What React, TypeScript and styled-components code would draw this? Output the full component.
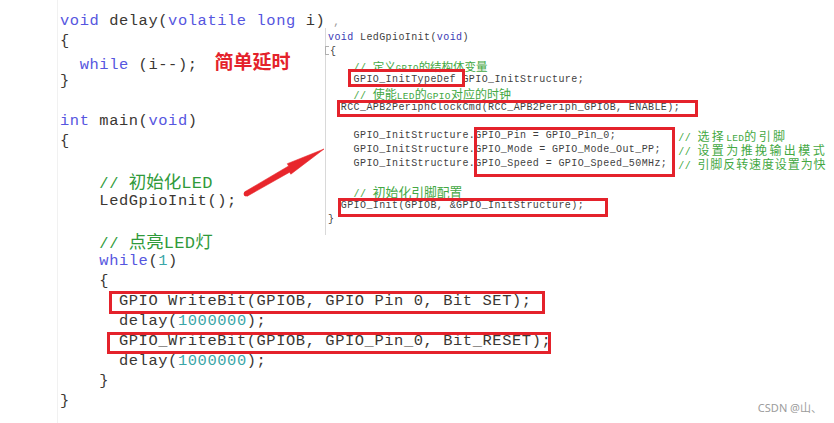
import React from "react";
import styled, { createGlobalStyle, css } from "styled-components";

const Global = createGlobalStyle`
  html, body { margin: 0; padding: 0; background: #fff; }
`;

const RED = "#e4222b";

const Page = styled.div`
  position: relative;
  width: 834px;
  height: 423px;
  overflow: hidden;
  background: #fff;
`;

const Editor = styled.div`
  box-sizing: border-box;
  height: 100%;
  margin-left: 57px;
  border-left: 1px solid #f1f1f1;
  padding: 11px 0 0 2px;
  font-family: "Liberation Mono", "Courier New", monospace;
  font-size: 15.4px;
  letter-spacing: 0.59px;
  line-height: 20px;
  color: #3b3733;
  white-space: pre;
`;

const Line = styled.div`
  height: 20px;
`;

const Kw = styled.span`
  color: #5656e0;
`;

const Num = styled.span`
  color: #3aa6a8;
`;

const Cm = styled.span<{ $c?: string }>`
  color: ${(p) => p.$c ?? "#2f9a3a"};
`;

const Cj = styled.span<{ $s: number; $ls?: number }>`
  font-family: "Noto Sans CJK SC", sans-serif;
  font-size: ${(p) => p.$s}px;
  letter-spacing: ${(p) => p.$ls ?? 0}px;
`;

const Lt = styled.span<{ $s: number }>`
  font-size: ${(p) => p.$s}px;
  letter-spacing: 0.3px;
`;

const Note = styled.span`
  font-family: "Noto Sans CJK SC", sans-serif;
  font-weight: 700;
  font-size: 19px;
  letter-spacing: 0;
  color: ${RED};
  margin-left: 17px;
`;

const Tick = styled.span`
  color: #9a9a9a;
  font-size: 11px;
  margin-left: 8px;
`;

type Inset = { $t: number; $r: number; $b: number; $l: number };

const boxOverlay = css<Inset>`
  position: relative;
  &::after {
    content: "";
    position: absolute;
    top: ${(p) => p.$t}px;
    right: ${(p) => p.$r}px;
    bottom: ${(p) => p.$b}px;
    left: ${(p) => p.$l}px;
    border: 3px solid ${RED};
    pointer-events: none;
  }
`;

const Boxed = styled.span<Inset>`
  ${boxOverlay}
`;

const Panel = styled.div`
  position: absolute;
  left: 325px;
  top: 28px;
  width: 509px;
  height: 207px;
  box-sizing: border-box;
  background: #fff;
  border-left: 1px solid #d9d9d9;
  padding: 3px 0 0 2px;
  font-family: "Liberation Mono", "Courier New", monospace;
  font-size: 10px;
  letter-spacing: 0.4px;
  line-height: 14px;
  color: #3f3f3f;
  white-space: pre;
`;

const PLine = styled.div`
  height: 14px;
`;

const PKw = styled.span`
  color: #3838b4;
`;

const Fold = styled.span`
  display: inline-block;
  width: 3px;
  height: 7px;
  margin: 0 1px 0 -3px;
  border: 1px solid #b0b0b0;
  border-right: none;
  vertical-align: -1px;
`;

const Group = styled.div`
  display: flex;
  height: 42px;
`;

const Col = styled.div``;

const BoxCol = styled.div<Inset>`
  ${boxOverlay}
`;

const CommentCol = styled.div`
  margin-left: 11px;
`;

const ArrowSvg = styled.svg`
  position: absolute;
  left: 0;
  top: 0;
  pointer-events: none;
`;

const Mark = styled.div`
  position: absolute;
  right: 12px;
  bottom: 8px;
  font-family: "Noto Sans", "Noto Sans CJK SC", sans-serif;
  font-size: 11px;
  color: #9c9c9c;
`;

const PC = "#43a843";

export default function App() {
  return (
    <Page>
      <Global />
      <Editor>
        <Line>
          <Kw>void</Kw> delay(<Kw>volatile</Kw> <Kw>long</Kw> i)<Tick>,</Tick>
        </Line>
        <Line>{"{"}</Line>
        <Line>
          {"  "}
          <Kw>while</Kw> (i--);<Note>简单延时</Note>
        </Line>
        <Line>{"}"}</Line>
        <Line />
        <Line>
          <Kw>int</Kw> main(<Kw>void</Kw>)
        </Line>
        <Line>{"{"}</Line>
        <Line />
        <Line>
          {"    "}
          <Cm>
            // <Cj $s={17.5}>初始化</Cj>
            <Lt $s={17}>LED</Lt>
          </Cm>
        </Line>
        <Line>{"    LedGpioInit();"}</Line>
        <Line />
        <Line>
          {"    "}
          <Cm>
            // <Cj $s={17.5}>点亮</Cj>
            <Lt $s={17}>LED</Lt>
            <Cj $s={17.5}>灯</Cj>
          </Cm>
        </Line>
        <Line>
          {"    "}
          <Kw>while</Kw>(<Num>1</Num>)
        </Line>
        <Line>{"    {"}</Line>
        <Line>
          {"      "}
          <Boxed $t={-1} $r={-13} $b={-4} $l={-10}>
            GPIO WriteBit(GPIOB, GPIO Pin 0, Bit SET);
          </Boxed>
        </Line>
        <Line>
          {"      delay("}
          <Num>1000000</Num>);
        </Line>
        <Line>
          {"      "}
          <Boxed $t={0} $r={-10} $b={-4} $l={-12}>
            GPIO_WriteBit(GPIOB, GPIO_Pin_0, Bit_RESET)
          </Boxed>
          ;
        </Line>
        <Line>
          {"      delay("}
          <Num>1000000</Num>);
        </Line>
        <Line>{"    }"}</Line>
        <Line>{"}"}</Line>
      </Editor>

      <Panel>
        <PLine>
          <PKw>void</PKw> LedGpioInit(<PKw>void</PKw>)
        </PLine>
        <PLine>
          <Fold />
          {"{"}
        </PLine>
        <PLine>
          {"    "}
          <Cm $c={PC}>
            // <Cj $s={11.5}>定义</Cj>
            <Lt $s={9}>GPIO</Lt>
            <Cj $s={11.5}>的结构体变量</Cj>
          </Cm>
        </PLine>
        <PLine>
          {"    "}
          <Boxed $t={-5} $r={-9} $b={-2} $l={-6}>
            GPIO_InitTypeDef
          </Boxed>
          {" GPIO_InitStructure;"}
        </PLine>
        <PLine>
          {"    "}
          <Cm $c={PC}>
            // <Cj $s={12}>使能</Cj>
            <Lt $s={9.5}>LED</Lt>
            <Cj $s={12}>的</Cj>
            <Lt $s={9.5}>GPIO</Lt>
            <Cj $s={12}>对应的时钟</Cj>
          </Cm>
        </PLine>
        <PLine>
          {"  "}
          <Boxed $t={-2} $r={-18} $b={-4} $l={-4}>
            RCC_APB2PeriphClockCmd(RCC_APB2Periph_GPIOB, ENABLE);
          </Boxed>
        </PLine>
        <PLine />
        <Group>
          <Col>
            <PLine>{"    GPIO_InitStructure."}</PLine>
            <PLine>{"    GPIO_InitStructure."}</PLine>
            <PLine>{"    GPIO_InitStructure."}</PLine>
          </Col>
          <BoxCol $t={-2} $r={-8} $b={-6} $l={-1}>
            <PLine>GPIO_Pin = GPIO_Pin_0;</PLine>
            <PLine>GPIO_Mode = GPIO_Mode_Out_PP;</PLine>
            <PLine>GPIO_Speed = GPIO_Speed_50MHz;</PLine>
          </BoxCol>
          <CommentCol>
            <PLine>
              <Cm $c={PC}>
                // <Cj $s={12} $ls={2.4}>选择</Cj>
                <Lt $s={9.5}>LED</Lt>
                <Cj $s={12} $ls={2.4}>的引脚</Cj>
              </Cm>
            </PLine>
            <PLine>
              <Cm $c={PC}>
                // <Cj $s={12} $ls={2.4}>设置为推挽输出模式</Cj>
              </Cm>
            </PLine>
            <PLine>
              <Cm $c={PC}>
                // <Cj $s={12} $ls={0.9}>引脚反转速度设置为快</Cj>
              </Cm>
            </PLine>
          </CommentCol>
        </Group>
        <PLine />
        <PLine>
          {"    "}
          <Cm $c={PC}>
            // <Cj $s={12.8}>初始化引脚配置</Cj>
          </Cm>
        </PLine>
        <PLine>
          {"  "}
          <Boxed $t={-2} $r={-24} $b={-6} $l={-3}>
            GPIO_Init(GPIOB, &amp;GPIO_InitStructure);
          </Boxed>
        </PLine>
        <PLine>{"}"}</PLine>
      </Panel>

      <ArrowSvg width="834" height="423" viewBox="0 0 834 423">
        <polygon
          points="247.2,196.2 289.6,172.2 290.8,174.2 324,149 287.3,163.7 288.6,166.0 244.8,191.8"
          fill="#e8262c"
          stroke="#e8262c"
          strokeWidth="0.6"
          strokeLinejoin="round"
        />
        <circle cx="246" cy="194" r="2.4" fill="#e8262c" />
      </ArrowSvg>

      <Mark>CSDN @山、</Mark>
    </Page>
  );
}
